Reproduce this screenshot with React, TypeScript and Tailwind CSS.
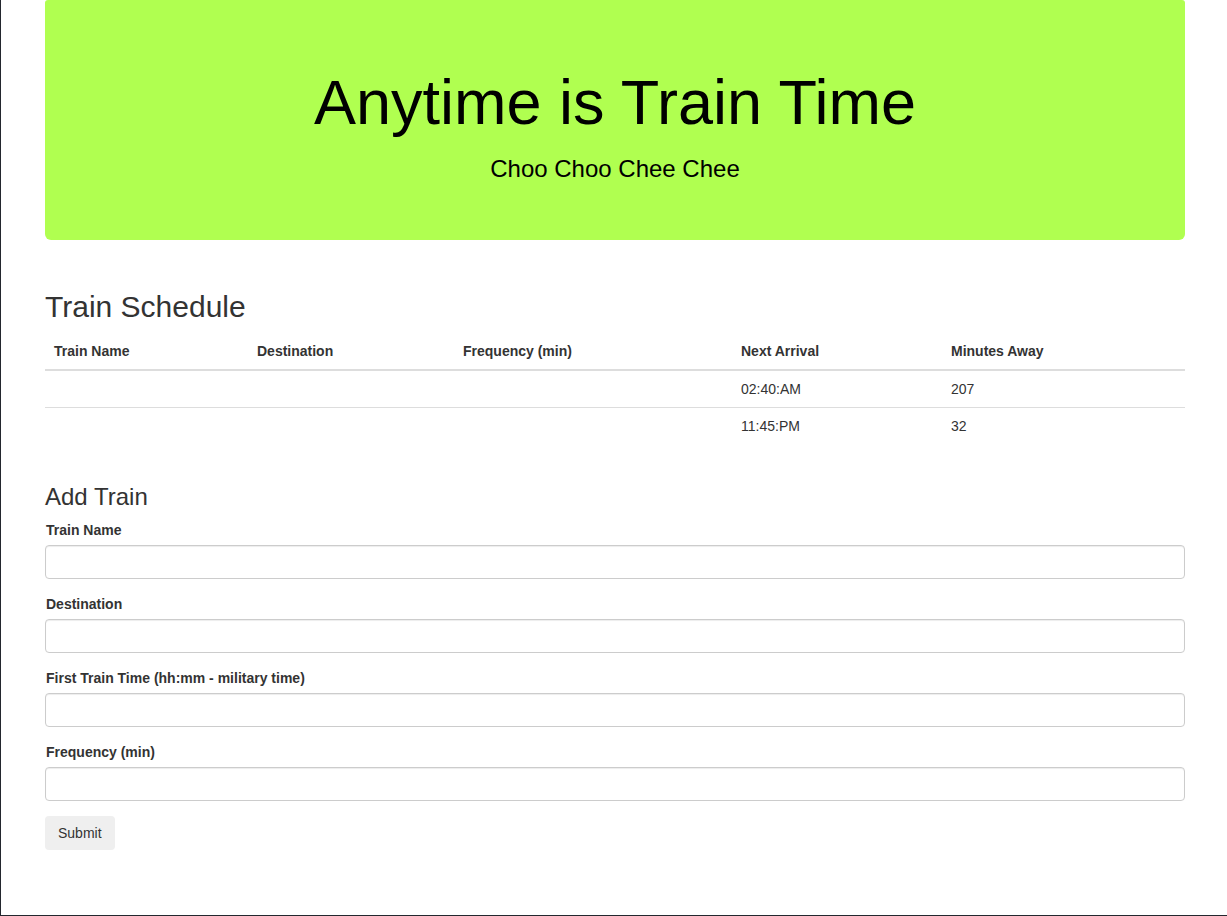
const TRAINS = [
  { name: "", destination: "", frequency: "", next: "02:40:AM", away: "207" },
  { name: "", destination: "", frequency: "", next: "11:45:PM", away: "32" },
];

const FIELDS = [
  "Train Name",
  "Destination",
  "First Train Time (hh:mm - military time)",
  "Frequency (min)",
];

const ScheduleTable = () => {
  return (
    <table className="w-full border-collapse mb-5 text-[14px]">
      <thead>
        <tr>
          <th className="w-[204px] text-left font-bold p-2 pl-[9px] leading-5 border-b-2 border-[#ddd]">Train Name</th>
          <th className="w-[206px] text-left font-bold p-2 leading-5 border-b-2 border-[#ddd]">Destination</th>
          <th className="w-[278px] text-left font-bold p-2 leading-5 border-b-2 border-[#ddd]">Frequency (min)</th>
          <th className="w-[210px] text-left font-bold p-2 leading-5 border-b-2 border-[#ddd]">Next Arrival</th>
          <th className="w-[242px] text-left font-bold p-2 leading-5 border-b-2 border-[#ddd]">Minutes Away</th>
        </tr>
      </thead>
      <tbody>
        {TRAINS.map((t, i) => (
          <tr key={i} className={i > 0 ? "border-t border-[#ddd]" : ""}>
            <td className="p-2 leading-5">{t.name}</td>
            <td className="p-2 leading-5">{t.destination}</td>
            <td className="p-2 leading-5">{t.frequency}</td>
            <td className="p-2 leading-5">{t.next}</td>
            <td className="p-2 leading-5">{t.away}</td>
          </tr>
        ))}
      </tbody>
    </table>
  );
};

const AddTrainForm = () => {
  return (
    <form onSubmit={(e) => e.preventDefault()}>
      {FIELDS.map((label) => (
        <div key={label} className="mb-[15px]">
          <label className="block font-bold text-[14px] leading-5 mb-[5px] pl-px">{label}</label>
          <input
            type="text"
            className="block w-full h-[34px] px-3 border border-[#ccc] rounded-[4px] bg-white shadow-[inset_0_1px_1px_rgba(0,0,0,0.075)] outline-none"
          />
        </div>
      ))}
      <button
        type="submit"
        className="h-[34px] px-[13px] rounded-[4px] bg-[#efefef] text-[14px] text-[#333]"
      >
        Submit
      </button>
    </form>
  );
};

export default function App() {
  return (
    <div className="min-h-[916px] border-l border-b border-[#23272e] bg-white text-[#333] font-['Liberation_Sans',Arial,sans-serif] text-[14px] leading-[20px]">
      <div className="w-[1170px] mx-auto pl-[16px] pr-[14px] flex flex-col">
        <div className="h-[240px] bg-[#b0ff50] rounded-b-md rounded-t-[3px] pt-[48px] text-center text-black mb-[30px]">
          <h1 className="mt-5 text-[63px] leading-[69px]">Anytime is Train Time</h1>
          <p className="mt-[17px] text-[24px] leading-[30px]">Choo Choo Chee Chee</p>
        </div>

        <h2 className="mt-5 mb-[10px] text-[30px] leading-[33px]">Train Schedule</h2>
        <ScheduleTable />

        <h3 className="mt-5 mb-[10px] text-[24px] leading-[26px]">Add Train</h3>
        <AddTrainForm />
      </div>
    </div>
  );
}
